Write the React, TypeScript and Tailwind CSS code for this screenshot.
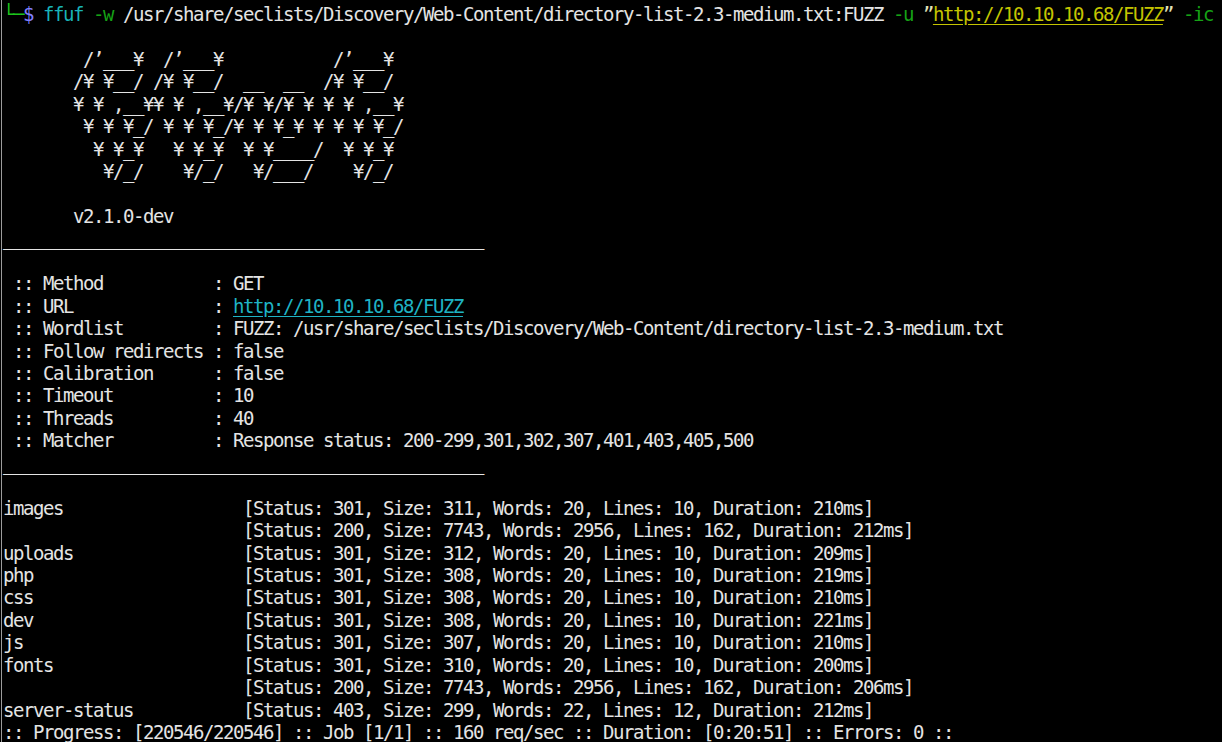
type Seg = { t: string; c?: string; u?: boolean };

const WHITE = "text-[#e4e4e4]";

const banner = [
  "",
  "        /’___¥  /’___¥           /’___¥",
  "       /¥ ¥__/ /¥ ¥__/  __  __  /¥ ¥__/",
  "       ¥ ¥ ,__¥¥ ¥ ,__¥/¥ ¥/¥ ¥ ¥ ¥ ,__¥",
  "        ¥ ¥ ¥_/ ¥ ¥ ¥_/¥ ¥ ¥_¥ ¥ ¥ ¥ ¥_/",
  "         ¥ ¥_¥   ¥ ¥_¥  ¥ ¥____/  ¥ ¥_¥",
  "          ¥/_/    ¥/_/   ¥/___/    ¥/_/",
  "",
  "       v2.1.0-dev",
  "________________________________________________",
  "",
];

const config: [string, string, boolean?][] = [
  ["Method", "GET"],
  ["URL", "http://10.10.10.68/FUZZ", true],
  ["Wordlist", "FUZZ: /usr/share/seclists/Discovery/Web-Content/directory-list-2.3-medium.txt"],
  ["Follow redirects", "false"],
  ["Calibration", "false"],
  ["Timeout", "10"],
  ["Threads", "40"],
  ["Matcher", "Response status: 200-299,301,302,307,401,403,405,500"],
];

const results = [
  ["images", "301", "311", "20", "10", "210"],
  ["", "200", "7743", "2956", "162", "212"],
  ["uploads", "301", "312", "20", "10", "209"],
  ["php", "301", "308", "20", "10", "219"],
  ["css", "301", "308", "20", "10", "210"],
  ["dev", "301", "308", "20", "10", "221"],
  ["js", "301", "307", "20", "10", "210"],
  ["fonts", "301", "310", "20", "10", "200"],
  ["", "200", "7743", "2956", "162", "206"],
  ["server-status", "403", "299", "22", "12", "212"],
];

const Row = ({ segs }: { segs: Seg[] }) => (
  <div className="h-[22.45px] whitespace-pre">
    {segs.map((s, i) => (
      <span
        key={i}
        className={(s.c ?? WHITE) + (s.u ? " underline underline-offset-[3px]" : "")}
      >
        {s.t}
      </span>
    ))}
  </div>
);

export default function App() {
  const command: Seg[] = [
    { t: "└─", c: "text-[#1cc41c]" },
    { t: "$", c: "text-[#8080ff]" },
    { t: " " },
    { t: "ffuf", c: "text-[#19b4b8]" },
    { t: " " },
    { t: "-w", c: "text-[#16a316]" },
    { t: " /usr/share/seclists/Discovery/Web-Content/directory-list-2.3-medium.txt:FUZZ " },
    { t: "-u", c: "text-[#16a316]" },
    { t: " " },
    { t: "”", c: "text-[#e0e0b8]" },
    { t: "http://10.10.10.68/FUZZ", c: "text-[#c4c400]", u: true },
    { t: "”", c: "text-[#e0e0b8]" },
    { t: " " },
    { t: "-ic", c: "text-[#16a316]" },
  ];

  return (
    <div className="h-screen w-full overflow-hidden bg-black">
      <div className="ml-px h-full border-l border-[#9c9c9c] pl-px pt-[3px] font-['DejaVu_Sans_Mono',monospace] text-[19px] leading-[22.45px] tracking-[-1.44px]">
        <Row segs={command} />
        {banner.map((l, i) => (
          <Row key={"b" + i} segs={[{ t: l }]} />
        ))}
        {config.map(([k, v, link]) => (
          <Row
            key={k}
            segs={[
              { t: " :: " + k.padEnd(17) + ": " },
              link ? { t: v, c: "text-[#1fb3c4]", u: true } : { t: v },
            ]}
          />
        ))}
        <Row segs={[{ t: "________________________________________________" }]} />
        <Row segs={[{ t: "" }]} />
        {results.map((r, i) => (
          <Row
            key={"r" + i}
            segs={[
              {
                t:
                  r[0].padEnd(24) +
                  `[Status: ${r[1]}, Size: ${r[2]}, Words: ${r[3]}, Lines: ${r[4]}, Duration: ${r[5]}ms]`,
              },
            ]}
          />
        ))}
        <Row
          segs={[
            {
              t: ":: Progress: [220546/220546] :: Job [1/1] :: 160 req/sec :: Duration: [0:20:51] :: Errors: 0 ::",
            },
          ]}
        />
      </div>
    </div>
  );
}
